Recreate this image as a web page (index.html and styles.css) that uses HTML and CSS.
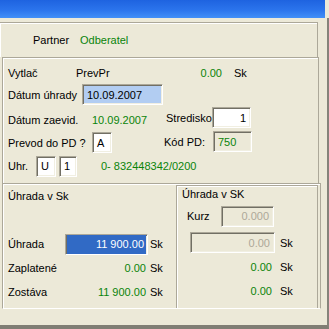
FILE: index.html
```html
<!DOCTYPE html>
<html lang="sk">
<head>
    <meta charset="UTF-8">
    <title>Úhrada</title>
    <link rel="stylesheet" href="styles.css">
</head>
<body>
    <div class="window">
        <div class="titlebar"></div>
        <div class="client">

            <div class="panel partner-panel">
                <span class="partner-label">Partner</span>
                <span class="green">Odberatel</span>
            </div>

            <div class="panel doc-panel">
                <div class="row">
                    <span class="lbl w-vytlac">Vytlač</span>
                    <span class="w-prevpr">PrevPr</span>
                    <span class="amt w-amt-top green">0.00</span>
                    <span class="cur-top">Sk</span>
                </div>
                <div class="cols">
                    <div class="col-left">
                        <div class="row">
                            <span class="lbl w-datum">Dátum úhrady</span>
                            <span class="field field-date w-date">10.09.2007</span>
                        </div>
                        <div class="row gap-4">
                            <span class="lbl w-prevod">Dátum zaevid.</span>
                            <span class="green">10.09.2007</span>
                        </div>
                        <div class="row gap-2">
                            <span class="lbl w-prevod">Prevod do PD ?</span>
                            <span class="field w-small">A</span>
                        </div>
                        <div class="row row-tall gap-2">
                            <span class="lbl w-uhr">Uhr.</span>
                            <span class="field w-small row-tall">U</span>
                            <span class="field w-one row-tall">1</span>
                            <span class="green account">0- 832448342/0200</span>
                        </div>
                    </div>
                    <div class="col-right">
                        <div class="row">
                            <span class="lbl w-stredisko">Stredisko</span>
                            <span class="field right w-code">1</span>
                        </div>
                        <div class="row gap-3">
                            <span class="lbl w-kod">Kód PD:</span>
                            <span class="field ro w-code green">750</span>
                        </div>
                    </div>
                </div>
            </div>

            <div class="panel pay-panel">
                <div class="pay-left">
                    <div class="title">Úhrada v Sk</div>
                    <div class="row row-tall pay-first">
                        <span class="lbl w-pay">Úhrada</span>
                        <span class="field w-pay-field row-tall sel-field">
                            <span class="selection">11 900.00</span>
                        </span>
                        <span class="cur-sel">Sk</span>
                    </div>
                    <div class="row gap-3 row-20">
                        <span class="lbl w-pay">Zaplatené</span>
                        <span class="amt w-pay-amt green">0.00</span>
                        <span class="cur">Sk</span>
                    </div>
                    <div class="row gap-4 row-20">
                        <span class="lbl w-pay">Zostáva</span>
                        <span class="amt w-pay-amt green">11 900.00</span>
                        <span class="cur">Sk</span>
                    </div>
                </div>

                <div class="pay-sk">
                    <div class="group-title">Úhrada v SK</div>
                    <div class="row row-20 kurz-row">
                        <span class="lbl w-kurz">Kurz</span>
                        <span class="field ro right grey w-kurz-field row-20">0.000</span>
                    </div>
                    <div class="row sk-field-row">
                        <span class="field ro right grey w-sk-field">0.00</span>
                        <span class="cur-sk">Sk</span>
                    </div>
                    <div class="row row-20 gap-4 sk-amt-row">
                        <span class="amt w-sk-amt green">0.00</span>
                        <span class="cur-sk2">Sk</span>
                    </div>
                    <div class="row row-20 gap-4 sk-amt-row">
                        <span class="amt w-sk-amt green">0.00</span>
                        <span class="cur-sk2">Sk</span>
                    </div>
                </div>
            </div>

        </div>
    </div>
</body>
</html>
```

FILE: styles.css
```css
* {
    box-sizing: border-box;
}

body {
    margin: 0;
    background-color: #ece9d8;
    font-family: "Liberation Sans", Arial, sans-serif;
    font-size: 11px;
    color: #000;
}

.window {
    width: 329px;
    height: 329px;
    display: flex;
    flex-direction: column;
    overflow: hidden;
}

.titlebar {
    height: 18px;
    margin-right: 4px;
    background: linear-gradient(to bottom, #1e63e0 0%, #2b74ec 55%, #4290f8 100%);
}

.client {
    flex: 1;
    display: flex;
    flex-direction: column;
    border-right: 2px solid #85837a;
    border-bottom: 4px solid #807e74;
}

.panel {
    border-top: 1px solid #aca899;
    box-shadow: inset 1px 1px #fff;
}

.green {
    color: #0a840a;
}

.grey {
    color: #aca899;
}

.row {
    display: flex;
    align-items: center;
    height: 21px;
    white-space: nowrap;
}

.row-tall {
    height: 22px;
}

.row-20 {
    height: 20px;
}

.gap-2 { margin-top: 2px; }
.gap-3 { margin-top: 3px; }
.gap-4 { margin-top: 4px; }

.lbl {
    flex: none;
}

.amt {
    flex: none;
    text-align: right;
}

/* sunken edit box */
.field {
    flex: none;
    display: flex;
    align-items: center;
    height: 21px;
    padding: 0 4px;
    background-color: #fff;
    border: 1px solid;
    border-color: #aca899 #fff #fff #aca899;
    box-shadow: inset 1px 1px #716f64, inset -1px -1px #f1efe2;
}

.field.ro {
    background-color: #ece9d8;
}

.field.right {
    justify-content: flex-end;
}

.field-date {
    background-color: #b2cdf2;
}

/* partner */
.partner-panel {
    margin-top: 4px;
    width: 318px;
    height: 35px;
    border-right: 1px solid #aca899;
    display: flex;
    align-items: center;
    padding-left: 33px;
}

.partner-label {
    width: 47px;
}

/* document */
.doc-panel {
    margin-left: 2px;
    width: 317px;
    height: 126px;
    border-left: 1px solid #aca899;
    border-right: 1px solid #aca899;
    padding: 4px 0 0 5px;
}

.w-vytlac { width: 68px; }
.w-prevpr { width: 100px; }
.w-amt-top { width: 46px; }
.cur-top { margin-left: 12px; }

.cols {
    display: flex;
    margin-top: 1px;
}

.col-left {
    width: 156px;
}

.col-right {
    padding-top: 23px;
}

.w-datum { width: 74px; }
.w-date { width: 81px; }
.w-prevod { width: 84px; }
.w-uhr { width: 28px; }
.w-small { width: 20px; }
.w-one {
    width: 18px;
    margin-left: 3px;
}

.account {
    margin-left: 24px;
}

.w-stredisko {
    width: 46px;
    margin-left: 2px;
}

.w-kod { width: 49px; }
.w-code { width: 39px; }

/* payment */
.pay-panel {
    margin-left: 2px;
    width: 319px;
    height: 126px;
    border-left: 1px solid #aca899;
    border-right: 1px solid #aca899;
    border-bottom: 1px solid #fff;
    display: flex;
}

.pay-left {
    width: 173px;
    padding: 2px 0 0 5px;
}

.title {
    height: 20px;
    line-height: 20px;
}

.pay-first {
    margin-top: 27px;
}

.w-pay { width: 57px; }

.w-pay-field {
    width: 83px;
    padding: 0 1px;
}

.selection {
    flex: 1;
    height: 100%;
    display: flex;
    align-items: center;
    justify-content: flex-end;
    padding-right: 2px;
    background-color: #316ac5;
    color: #fff;
}

.cur-sel { margin-left: 2px; }
.w-pay-amt { width: 81px; }
.cur { margin-left: 4px; }

.pay-sk {
    width: 142px;
    margin-top: 1px;
    border-top: 1px solid #aca899;
    border-left: 1px solid #aca899;
    border-right: 1px solid #aca899;
    box-shadow: inset 1px 1px #fff;
}

.group-title {
    height: 16px;
    line-height: 16px;
    padding-left: 5px;
}

.kurz-row {
    margin-top: 4px;
    padding-left: 10px;
}

.w-kurz { width: 34px; }
.w-kurz-field { width: 53px; }

.sk-field-row {
    margin-top: 6px;
    padding-left: 13px;
}

.w-sk-field { width: 85px; }
.cur-sk { margin-left: 5px; }

.sk-amt-row {
    padding-left: 13px;
}

.w-sk-amt { width: 82px; }
.cur-sk2 { margin-left: 8px; }
```
